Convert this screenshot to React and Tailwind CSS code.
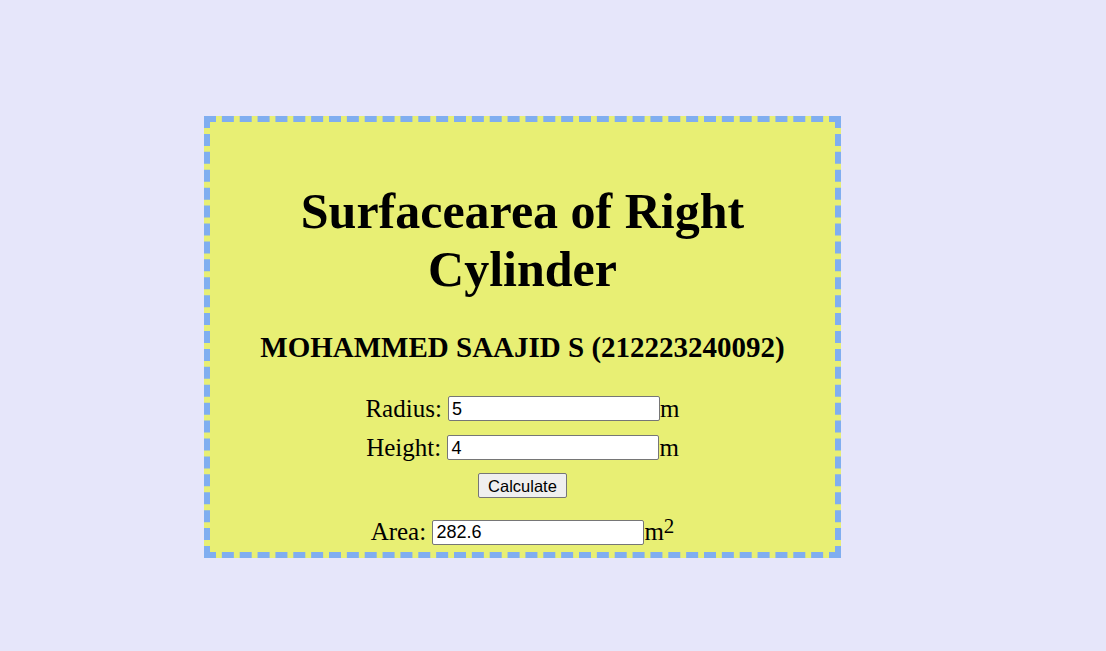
import React, { useState } from 'react';

export default function App() {
  const [radius, setRadius] = useState('5');
  const [height, setHeight] = useState('4');
  const [area, setArea] = useState('282.6');

  const calculate = () => {
    const r = parseFloat(radius);
    const h = parseFloat(height);
    setArea((2 * 3.14 * r * (r + h)).toFixed(1));
  };

  const inputCls =
    "w-[212px] h-[25px] bg-white border border-[#767676] rounded-[2px] px-[3px] text-[18px] text-black font-['Liberation_Sans',Arial,sans-serif] outline-none";

  return (
    <div className="min-h-[651px] w-full bg-[#e6e6fa] pt-[116px] pl-[204px] font-['Liberation_Serif','Times_New_Roman',serif] text-black">
      <div className="w-[637px] h-[442px] border-[6px] border-dashed border-[#80aef0] bg-[#e8ef74] flex flex-col items-center">
        <h1 className="mt-[60px] w-[520px] text-center text-[50px] font-bold leading-[58px]">
          Surfacearea of Right Cylinder
        </h1>
        <h2 className="mt-[32px] text-[29px] font-bold leading-[34px]">
          MOHAMMED SAAJID S (212223240092)
        </h2>
        <div className="mt-[25px] flex flex-col items-center text-[25px] leading-[28px]">
          <div className="flex items-center h-[39px]">
            <span>Radius:&nbsp;</span>
            <input className={inputCls} value={radius} onChange={(e) => setRadius(e.target.value)} />
            <span>m</span>
          </div>
          <div className="flex items-center h-[39px]">
            <span>Height:&nbsp;</span>
            <input className={inputCls} value={height} onChange={(e) => setHeight(e.target.value)} />
            <span>m</span>
          </div>
          <button
            onClick={calculate}
            className="mt-[6px] h-[25px] px-[9px] bg-[#efefef] border border-[#767676] rounded-[2px] text-[16.5px] leading-[20px] font-['Liberation_Sans',Arial,sans-serif]"
          >
            Calculate
          </button>
          <div className="mt-[20px] flex items-center h-[28px]">
            <span>Area:&nbsp;</span>
            <input className={inputCls} value={area} readOnly />
            <span>
              m<sup className="text-[21px] relative -top-[7px] align-baseline">2</sup>
            </span>
          </div>
        </div>
      </div>
    </div>
  );
}
